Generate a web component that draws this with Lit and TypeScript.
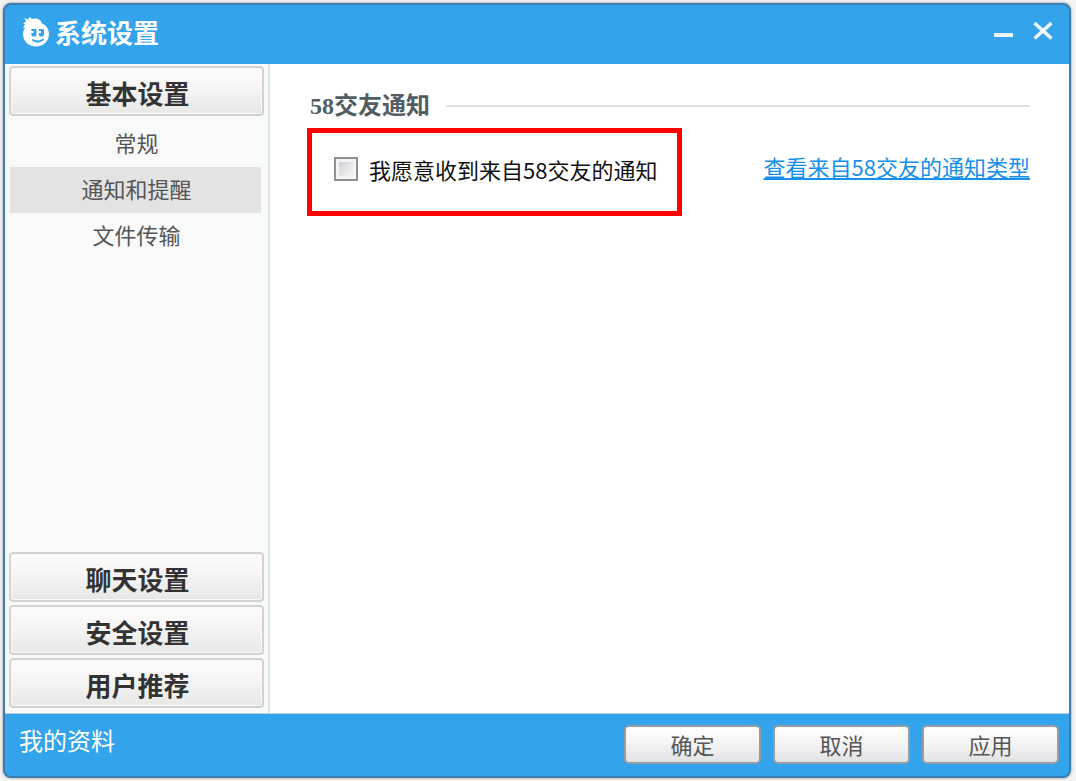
import { LitElement, html, css } from "lit";
import { customElement, property, state } from "lit/decorators.js";

@customElement("brand-face")
class BrandFace extends LitElement {
  static styles = css`
    :host { display: block; width: 28px; height: 30px; }
    svg { display: block; }
  `;
  render() {
    return html`<svg width="28" height="30" viewBox="0 0 28 30" aria-hidden="true">
      <path fill="#fff" d="M2.500 1 L6 2.500 L7.500 0 L10 1.800 L15 1.500 L18.500 3.500 L20 6.500 C24.500 8.500 27 12 27 17 C27 24 21.500 29.500 14 29.500 C6.500 29.500 1 24 1 17 C1 14 2 12 3.500 10.500 L1 11 L3 7.500 L1 6.500 L4 4.500 Z"/>
      <g fill="#33a4eb">
        <path d="M9.500 12h4a1 1 0 0 1 1 1v4a2.600 2.600 0 0 1-5.200 0v-1h2.200v-2h-2z"/>
        <path d="M17 12h4a1 1 0 0 1 1 1v4a2.600 2.600 0 0 1-5.200 0v-1h2.200v-2h-2z"/>
      </g>
      <path d="M11 23q5 3.500 10-.5" fill="none" stroke="#33a4eb" stroke-width="2" stroke-linecap="round"/>
    </svg>`;
  }
}

@customElement("settings-sidebar")
class SettingsSidebar extends LitElement {
  static styles = css`
    :host {
      display: flex;
      flex-direction: column;
      box-sizing: border-box;
      flex: 0 0 265px;
      padding: 2px 4px 5px;
      background: #f8faf9;
      border-right: 2px solid #dbe4e7;
    }
    button { font-family: inherit; margin: 0; cursor: pointer; }
    .section {
      box-sizing: border-box;
      height: 50px;
      padding: 3px 0 0 2px;
      border: 2px solid #d2d2d2;
      border-radius: 4px;
      background: linear-gradient(#fdfcfa, #f6f5f4 45%, #e7e7e7);
      box-shadow: inset 0 0 0 1px #fafafa;
      color: #333;
      font-size: 26px;
      font-weight: 700;
      line-height: 36px;
    }
    .items { display: flex; flex-direction: column; padding: 5px 3px 0 1px; }
    .item {
      height: 46px;
      padding: 0 0 4px 2px;
      border: 0;
      background: none;
      color: #555;
      font-size: 22px;
      line-height: 32px;
    }
    .item.selected { background: #e3e3e3; }
    .others { display: flex; flex-direction: column; gap: 3px; margin-top: auto; }
  `;

  @state() private selected = "通知和提醒";

  render() {
    return html`
      <button class="section">基本设置</button>
      <div class="items">
        ${["常规", "通知和提醒", "文件传输"].map(
          (name) => html`<button
            class="item ${name === this.selected ? "selected" : ""}"
            @click=${() => (this.selected = name)}
          >${name}</button>`
        )}
      </div>
      <div class="others">
        ${["聊天设置", "安全设置", "用户推荐"].map(
          (name) => html`<button class="section">${name}</button>`
        )}
      </div>
    `;
  }
}

@customElement("app-root")
class AppRoot extends LitElement {
  static styles = css`
    :host {
      display: block;
      box-sizing: border-box;
      height: 100vh;
      padding: 3px 5px 3px 3px;
      background: #f4f4f4;
      font-family: "Noto Sans CJK SC", sans-serif;
    }
    .window {
      display: flex;
      flex-direction: column;
      box-sizing: border-box;
      height: 100%;
      border: 2px solid #3c7cb0;
      border-radius: 8px;
      overflow: hidden;
      background: #33a4eb;
      box-shadow: 0 0 3px #888;
    }
    button { font-family: inherit; margin: 0; cursor: pointer; }
    header {
      display: flex;
      align-items: center;
      gap: 5px;
      box-sizing: border-box;
      height: 59px;
      padding: 0 15px 6px 17px;
    }
    h1 {
      margin: 0;
      flex: 1;
      color: #fff;
      font-size: 26px;
      line-height: 36px;
      font-weight: 700;
    }
    .controls { display: flex; gap: 18px; padding-bottom: 4px; }
    .control { display: block; padding: 0; border: 0; background: none; height: 24px; }
    .control svg { display: block; }
    .body { flex: 1; display: flex; min-height: 0; }
    main { flex: 1; padding: 26px 39px 0 37px; background: #fff; }
    .group {
      display: flex;
      align-items: center;
      gap: 16px;
      padding-left: 3px;
    }
    h2 {
      margin: 0;
      color: #515d63;
      font: 700 24px/32px "Liberation Serif", "Noto Sans CJK SC", serif;
    }
    .rule { flex: 1; height: 2px; background: #dce3e6; }
    .row { display: flex; justify-content: space-between; align-items: flex-start; margin-top: 6px; }
    .option {
      display: flex;
      align-items: center;
      gap: 11px;
      padding: 20px 20px 26px 22px;
      border: 5px solid #f00;
      color: #111;
      font-size: 22px;
      line-height: 32px;
    }
    .option input {
      appearance: none;
      box-sizing: border-box;
      width: 24px;
      height: 24px;
      margin: 0;
      border: 2px solid #8e8f8f;
      background: linear-gradient(135deg, #ccd0d5, #f6f6f6) content-box, #f4f4f4;
      padding: 3px;
    }
    .option input:checked { background: #33a4eb content-box; }
    .more {
      margin-top: 22px;
      color: #1690ea;
      font-size: 22px;
      line-height: 32px;
      text-decoration-thickness: 2px;
      text-underline-offset: 2px;
      text-decoration-skip-ink: none;
    }
    footer {
      display: flex;
      align-items: center;
      justify-content: space-between;
      box-sizing: border-box;
      height: 63px;
      padding: 0 10px 2px 14px;
      border-top: 1px solid #b5d3e6;
    }
    .profile { color: #fff; font-size: 24px; line-height: 32px; text-decoration: none; padding-bottom: 8px; }
    .actions { display: flex; gap: 12px; }
    .action {
      box-sizing: border-box;
      width: 137px;
      height: 39px;
      padding: 0;
      border: 2px solid #979da2;
      border-radius: 5px;
      background: linear-gradient(#fff, #f3f3f4 50%, #e1e2e5);
      color: #555;
      font-size: 22px;
      line-height: 32px;
    }
  `;

  @property({ type: Boolean }) notify = false;

  render() {
    return html`
      <div class="window">
        <header>
          <brand-face></brand-face>
          <h1>系统设置</h1>
          <div class="controls">
            <button class="control" aria-label="最小化">
              <svg width="22" height="24" viewBox="0 0 22 24"><path d="M2 17h19" stroke="#eef7fd" stroke-width="4"/></svg>
            </button>
            <button class="control" aria-label="关闭">
              <svg width="22" height="24" viewBox="0 0 22 24"><path d="M2.500 5L19.500 20.500M19.500 5L2.500 20.500" stroke="#eef7fd" stroke-width="3.600"/></svg>
            </button>
          </div>
        </header>
        <div class="body">
          <settings-sidebar></settings-sidebar>
          <main>
            <div class="group"><h2>58交友通知</h2><div class="rule"></div></div>
            <div class="row">
              <label class="option">
                <input
                  type="checkbox"
                  .checked=${this.notify}
                  @change=${(e: Event) => (this.notify = (e.target as HTMLInputElement).checked)}
                />
                <span>我愿意收到来自58交友的通知</span>
              </label>
              <a class="more" href="#types">查看来自58交友的通知类型</a>
            </div>
          </main>
        </div>
        <footer>
          <a class="profile" href="#profile">我的资料</a>
          <div class="actions">
            <button class="action">确定</button>
            <button class="action">取消</button>
            <button class="action">应用</button>
          </div>
        </footer>
      </div>
    `;
  }
}
